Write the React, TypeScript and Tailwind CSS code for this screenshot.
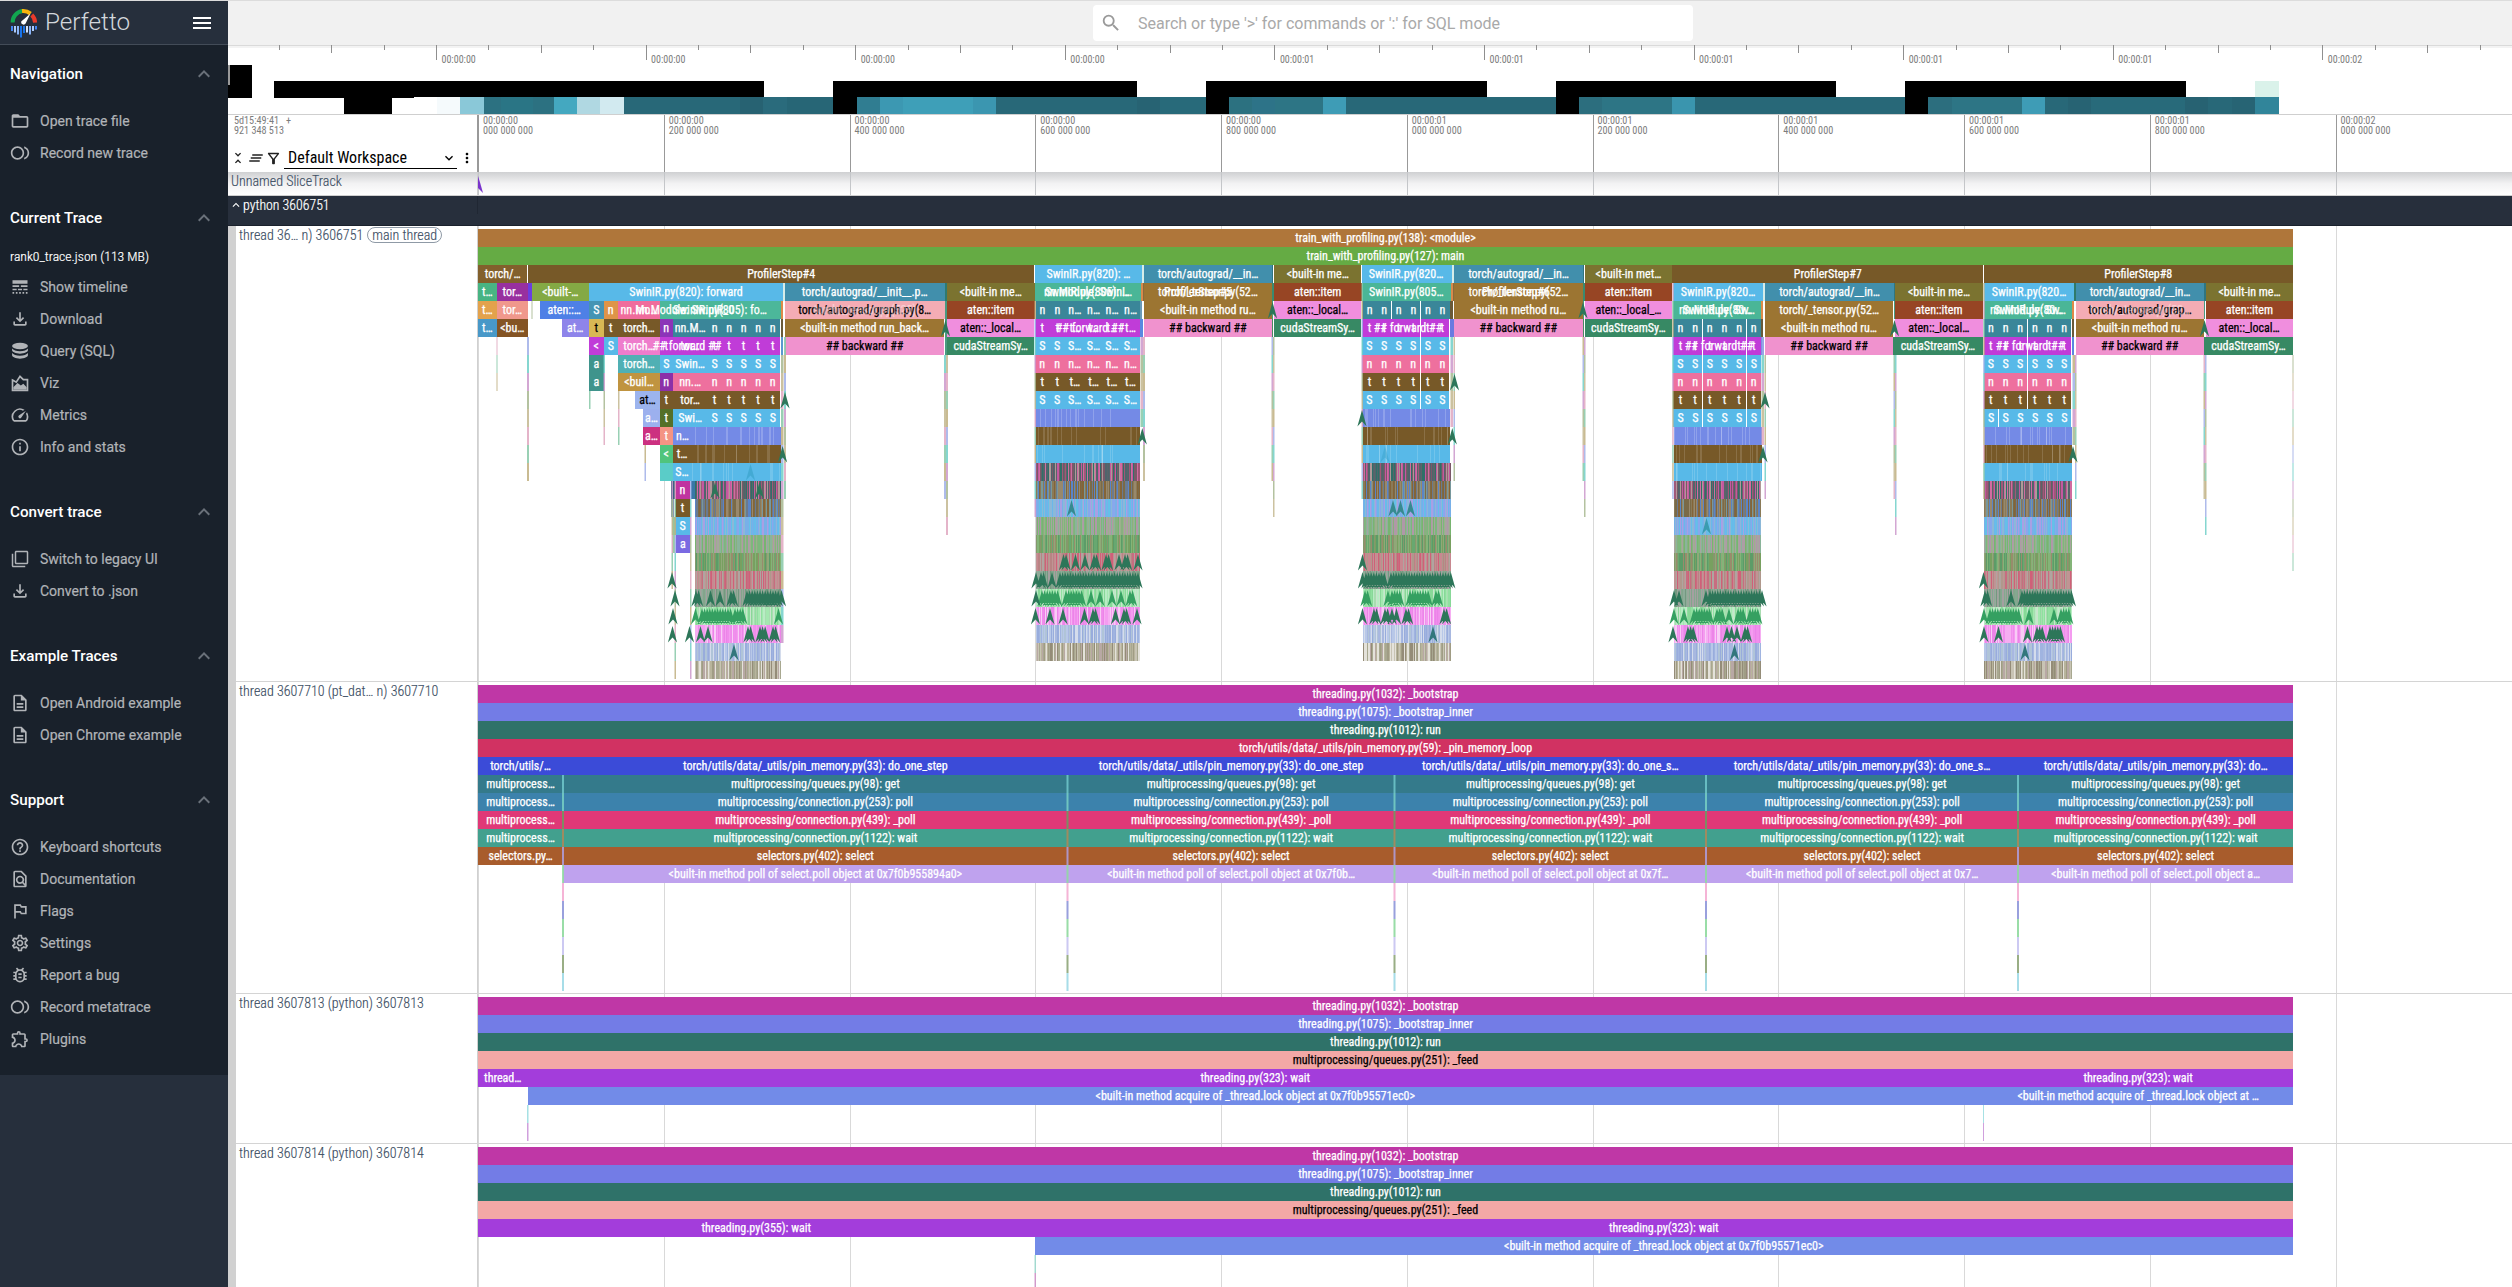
import React from 'react';
import {
  MdClearAll,
  MdFilterNone,
  MdHelpOutline,
  MdKeyboardArrowDown,
  MdKeyboardArrowUp,
  MdLineStyle,
  MdMenu,
  MdMoreVert,
  MdOutlineBugReport,
  MdOutlineDescription,
  MdOutlineExtension,
  MdOutlineFiberSmartRecord,
  MdOutlineFileDownload,
  MdOutlineFilterAlt,
  MdOutlineFindInPage,
  MdOutlineFolderOpen,
  MdOutlinedFlag,
  MdOutlineInfo,
  MdOutlineSettings,
  MdOutlineSpeed,
  MdSearch,
  MdUnfoldLess,
} from 'react-icons/md';

/* ------------------------------------------------------------------ */
/* Time axis: every x below is in page pixels, the axis starts at 478. */
/* ------------------------------------------------------------------ */
const AXIS = 478;
const END = 2293;
const ROW = 18;

type Slice = { x0: number; x1: number; c: string; t?: string; dark?: boolean };
type Label = { x: number; t: string; dim?: boolean };
type RowData = { s: Slice[]; l?: Label[] };

const sl = (x0: number, x1: number, c: string, t?: string, dark?: boolean): Slice => ({ x0, x1, c, t, dark });

const BROWN = '#775928';
const SKY = '#58b9e8';
const TEAL = '#3a8699';
const MINT = '#4ab697';
const VIOLET = '#c03cd8';
const PINK = '#ee709e';
const PERI = '#748ae6';
const BLUE = '#418fac';
const OCHRE = '#9c7532';
const OLIVE = '#7b7330';
const RUST = '#974524';
const ORCHID = '#f08ede';
const ROSE = '#f092ce';
const PINE = '#378964';
const SALMON = '#f4acb4';

/* Six equal layers of one forward pass, each with its own short label. */
function cells(bounds: number[], c: string, texts: string[]): Slice[] {
  return texts.map((t, i) => sl(bounds[i], bounds[i + 1] - 0.3, c, t));
}
const six = (x0: number, x1: number) => Array.from({ length: 7 }, (_, i) => x0 + ((x1 - x0) * i) / 6);

const B5 = [1035.5, 1049.5, 1065.5, 1084.5, 1103, 1121.5, 1140];
const B6 = six(1362.5, 1450);
const B7 = six(1673.5, 1761.5);
const B8 = six(1984, 2072);
const B4 = [673, 707.5, 722, 736.5, 751, 765.5, 780.5];
const rep = (t: string) => [t, t, t, t, t, t];
const five = (t: string) => [t, t, t + '…', t + '…', t + '…', t + '…'];
const tail = (t: string, k: string) => [t, k, k, k, k, k];

const MAIN: RowData[] = [
  { s: [sl(AXIS, END, '#af763a', 'train_with_profiling.py(138): <module>')] },
  { s: [sl(AXIS, END, '#65ab44', 'train_with_profiling.py(127): main')] },
  {
    s: [
      sl(478, 527.4, '#82602c', 'torch/…'),
      sl(527.8, 1034.5, BROWN, 'ProfilerStep#4'),
      sl(1035, 1142, SKY, 'SwinIR.py(820): …'),
      sl(1142, 1144, '#d6ece8'),
      sl(1144, 1272, BLUE, 'torch/autograd/__in…'),
      sl(1272, 1273.5, '#2f7580'),
      sl(1274, 1361.5, OLIVE, '<built-in me…'),
      sl(1362, 1450, SKY, 'SwinIR.py(820…'),
      sl(1450, 1452, SKY),
      sl(1452, 1454, '#d6ece8'),
      sl(1454, 1583, BLUE, 'torch/autograd/__in…'),
      sl(1583, 1584.5, '#2f7580'),
      sl(1585, 1672, OLIVE, '<built-in met…'),
      sl(1672.4, 1983.3, BROWN, 'ProfilerStep#7'),
      sl(1983.7, END, BROWN, 'ProfilerStep#8'),
    ],
  },
  {
    s: [
      sl(478, 496.5, '#48b483', 't…'),
      sl(497, 527.5, '#98309f', 'tor…'),
      sl(528, 532, '#6a3ee0'),
      sl(532, 588.5, '#84a944', '<built-…'),
      sl(589, 783, SKY, 'SwinIR.py(820): forward'),
      sl(783, 785, '#d6ece8'),
      sl(785, 944.5, BLUE, 'torch/autograd/__init__.p…'),
      sl(945, 947, '#2f7a70'),
      sl(947, 1034.5, OLIVE, '<built-in me…'),
      sl(1035, 1141, MINT, 'nn.Module: SwinI…'),
      sl(1141, 1142.5, '#d88a4c'),
      sl(1142.5, 1144, '#8a6a3c'),
      sl(1144, 1272, OCHRE, 'torch/_tensor.py(52…'),
      sl(1272, 1273.5, '#3a8a70'),
      sl(1274, 1361.5, RUST, 'aten::item'),
      sl(1362, 1450.5, MINT, 'SwinIR.py(805…'),
      sl(1450.5, 1452.5, '#d88a4c'),
      sl(1453, 1454, '#8a6a3c'),
      sl(1454, 1583, OCHRE, 'torch/_tensor.py(52…'),
      sl(1583, 1584.5, '#3a8a70'),
      sl(1585, 1672, RUST, 'aten::item'),
      sl(1673, 1763, SKY, 'SwinIR.py(820…'),
      sl(1763, 1765, '#d6ece8'),
      sl(1765, 1894, BLUE, 'torch/autograd/__in…'),
      sl(1894, 1895, '#2f7580'),
      sl(1895, 1983, OLIVE, '<built-in me…'),
      sl(1984, 2074, SKY, 'SwinIR.py(820…'),
      sl(2074, 2075.5, '#2f7a6a'),
      sl(2076, 2204, BLUE, 'torch/autograd/__in…'),
      sl(2204, 2205.5, '#2f7580'),
      sl(2206, END, OLIVE, '<built-in me…'),
    ],
    l: [
      { x: 1087, t: 'SwinIR.py(805): …' },
      { x: 1198, t: 'ProfilerStep#5' },
      { x: 1516, t: 'ProfilerStep#6' },
    ],
  },
  {
    s: [
      sl(478, 496.5, '#e3a24c', 't…'),
      sl(497, 527.5, '#f0988c', 'tor…'),
      sl(540, 588.5, '#4e80e6', 'aten::…'),
      sl(589, 603.5, '#4594b4', 'S'),
      sl(604, 617.5, '#de9448', 'n'),
      sl(618, 660, '#f06c9c', 'nn.Mo…'),
      sl(660, 780.5, '#4cb79a'),
      sl(781, 783, '#de8a48'),
      sl(785, 944.5, SALMON, 'torch/autograd/graph.py(8…', true),
      sl(945, 947, '#4a9a80'),
      sl(947, 1034.5, RUST, 'aten::item'),
      ...cells(B5, TEAL, five('n')),
      sl(1140.5, 1142.5, '#6a9ab8'),
      sl(1144, 1272, OCHRE, '<built-in method ru…'),
      sl(1272, 1273.5, '#4a9a80'),
      sl(1274, 1361.5, ORCHID, 'aten::_local…', true),
      ...cells(B6, TEAL, rep('n')),
      sl(1450, 1453, '#6a5a38'),
      sl(1454, 1583, OCHRE, '<built-in method ru…'),
      sl(1583, 1584.5, '#4a9a80'),
      sl(1585, 1672, ORCHID, 'aten::_local_…', true),
      sl(1673, 1761, MINT, 'nn.Module: Sw…'),
      sl(1761.5, 1763.5, '#de8a48'),
      sl(1765, 1893.5, OCHRE, 'torch/_tensor.py(52…'),
      sl(1894, 1895, '#4a9a80'),
      sl(1895, 1983, RUST, 'aten::item'),
      sl(1984, 2072, MINT, 'nn.Module: Sw…'),
      sl(2072.5, 2074.5, '#de8a48'),
      sl(2076, 2204, SALMON, 'torch/autograd/grap…', true),
      sl(2204, 2205.5, '#4a9a80'),
      sl(2206, END, RUST, 'aten::item'),
    ],
    l: [
      { x: 685, t: 'nn.Module: SwinIR_0' },
      { x: 720, t: 'SwinIR.py(805): fo…' },
      { x: 865, t: 'torch/_tensor.py(525)', dim: true },
      { x: 1717, t: 'SwinIR.py(80…' },
      { x: 2028, t: 'SwinIR.py(80…' },
      { x: 2140, t: 'torch/_tensor.py(52…', dim: true },
    ],
  },
  {
    s: [
      sl(478, 496.5, '#4898c8', 't…'),
      sl(497, 527.5, '#845424', '<bu…'),
      sl(562, 588.5, '#8e84ea', 'at…'),
      sl(589, 603.5, '#d8b854', 't', true),
      sl(604, 617.5, BROWN, 't'),
      sl(618, 660, BROWN, 'torch…'),
      sl(660, 672.5, '#8c34b8', 'n'),
      ...cells(B4, TEAL, tail('nn.M…', 'n')),
      sl(781, 783, '#6a5a38'),
      sl(785, 944.5, OCHRE, '<built-in method run_back…'),
      sl(945, 947, '#4a9a80'),
      sl(947, 1034.5, ORCHID, 'aten::_local…', true),
      ...cells(B5, VIOLET, ['t', 't', 't…', 't…', 't…', 't…']),
      sl(1140.5, 1143, '#5a88e0'),
      sl(1144, 1272, ROSE, '## backward ##', true),
      sl(1272, 1273.5, '#4a8a64'),
      sl(1274, 1361.5, PINE, 'cudaStreamSy…'),
      ...cells(B6, VIOLET, rep('t')),
      sl(1450, 1454, '#6a7ae0'),
      sl(1454, 1583, ROSE, '## backward ##', true),
      sl(1583, 1584.5, '#4a8a64'),
      sl(1585, 1672, PINE, 'cudaStreamSy…'),
      ...cells(B7, TEAL, rep('n')),
      sl(1761.5, 1763.5, '#6a5a38'),
      sl(1765, 1893.5, OCHRE, '<built-in method ru…'),
      sl(1895, 1983, ORCHID, 'aten::_local…', true),
      ...cells(B8, TEAL, rep('n')),
      sl(2072, 2074, '#6a5a38'),
      sl(2076, 2204, OCHRE, '<built-in method ru…'),
      sl(2206, END, ORCHID, 'aten::_local…', true),
    ],
    l: [
      { x: 1090, t: '## forward ##' },
      { x: 1408, t: '## forward ##' },
    ],
  },
  {
    s: [
      sl(589, 603.5, VIOLET, '<'),
      sl(604, 617.5, SKY, 'S'),
      sl(618, 660, '#ee7ccc', 'torch…'),
      sl(660, 672.5, VIOLET, 't'),
      ...cells(B4, VIOLET, tail('tor…', 't')),
      sl(781, 783, '#5a98d0'),
      sl(785, 944.5, ROSE, '## backward ##', true),
      sl(945, 947, '#4a9a80'),
      sl(947, 1034.5, PINE, 'cudaStreamSy…'),
      ...cells(B5, SKY, five('S')),
      ...cells(B6, SKY, rep('S')),
      ...cells(B7, VIOLET, rep('t')),
      sl(1761.5, 1764, '#6a7ae0'),
      sl(1765, 1893.5, ROSE, '## backward ##', true),
      sl(1893.5, 1983, PINE, 'cudaStreamSy…'),
      ...cells(B8, VIOLET, rep('t')),
      sl(2072, 2074.5, '#5a88e0'),
      sl(2076, 2204, ROSE, '## backward ##', true),
      sl(2204.5, END, PINE, 'cudaStreamSy…'),
    ],
    l: [
      { x: 687, t: '## forward ##' },
      { x: 1719, t: '## forward ##' },
      { x: 2030, t: '## forward ##' },
    ],
  },
  {
    s: [
      sl(589, 603.5, '#3f948c', 'a'),
      sl(618, 660, '#50b0b4', 'torch…'),
      sl(660, 672.5, SKY, 'S'),
      ...cells(B4, SKY, tail('Swin…', 'S')),
      ...cells(B5, PINK, five('n')),
      ...cells(B6, PINK, rep('n')),
      ...cells(B7, SKY, rep('S')),
      ...cells(B8, SKY, rep('S')),
    ],
  },
  {
    s: [
      sl(589, 603.5, '#3f948c', 'a'),
      sl(618, 660, '#c09440', '<buil…'),
      sl(660, 672.5, '#8c30a8', 'n'),
      ...cells(B4, PINK, tail('nn.…', 'n')),
      ...cells(B5, BROWN, five('t')),
      ...cells(B6, BROWN, rep('t')),
      ...cells(B7, PINK, rep('n')),
      ...cells(B8, PINK, rep('n')),
    ],
  },
  {
    s: [
      sl(635, 660, '#9cb4ee', 'at…', true),
      sl(660, 672.5, BROWN, 't'),
      ...cells(B4, BROWN, tail('tor…', 't')),
      ...cells(B5, SKY, five('S')),
      ...cells(B6, SKY, rep('S')),
      ...cells(B7, BROWN, rep('t')),
      ...cells(B8, BROWN, rep('t')),
    ],
  },
  {
    s: [
      sl(643, 660, '#9cb0ee', 'a…'),
      sl(660, 672.5, '#547028', 't'),
      ...cells(B4, SKY, tail('Swi…', 'S')),
      sl(1035.5, 1140, PERI),
      sl(1362.5, 1450, PERI),
      ...cells(B7, SKY, rep('S')),
      ...cells(B8, SKY, rep('S')),
    ],
  },
  {
    s: [
      sl(643, 660, '#cc3080', 'a…'),
      sl(660, 672.5, '#f49484', 't'),
      sl(673, 692, PERI, 'n…'),
      sl(692, 780.5, PERI),
      sl(1035.5, 1140, BROWN),
      sl(1362.5, 1450, BROWN),
      sl(1673.5, 1761.5, PERI),
      sl(1984, 2072, PERI),
    ],
  },
  {
    s: [
      sl(660, 672.5, '#50c47c', '<'),
      sl(673, 691, BROWN, 't…'),
      sl(691, 780.5, BROWN),
      sl(1035.5, 1140, SKY),
      sl(1362.5, 1450, SKY),
      sl(1673.5, 1761.5, BROWN),
      sl(1984, 2072, BROWN),
    ],
  },
  {
    s: [
      sl(660, 672.5, '#5accc8'),
      sl(673, 691, SKY, 'S…'),
      sl(691, 780.5, SKY),
      sl(1673.5, 1761.5, SKY),
      sl(1984, 2072, SKY),
    ],
  },
  { s: [sl(671, 675, '#3a6480'), sl(675, 690, '#c034a0', 'n'), sl(690.5, 695.5, '#3878a8')] },
  { s: [sl(671, 674, '#8a9ab4'), sl(675, 690, BROWN, 't')] },
  { s: [sl(672, 675, '#9ac49a'), sl(675, 690, SKY, 'S')] },
  { s: [sl(672, 675, '#9ad0a0'), sl(676, 689.5, '#7a6ae2', 'a')] },
];

/* ---------- dense bands of sub-pixel slices ---------- */
const BANDS: string[][] = [
  ['#c458a0', '#2f7068', '#a05878', '#5a6468', '#d06ca0', '#7a5868', '#b09898', '#50646c'],
  ['#7a6a48', '#5a84c8', '#8a7a58', '#78989c', '#846438', '#6a7a90', '#98886c'],
  ['#6ab8ea', '#88a8ec', '#78b0e8', '#a8a0e4', '#64c0e8', '#8cb8d8'],
  ['#88b080', '#78b470', '#a8a4a0', '#8ab49a', '#b098a8', '#9cb08c', '#7cb87c'],
  ['#78a060', '#5c9c68', '#84986c', '#90a878', '#68a870', '#988c6c', '#84b478'],
  ['#c86c80', '#b88484', '#c09494', '#d06078', '#b0988c', '#c88890', '#b0a4a0'],
  ['#84a890', '#749880', '#8cac98', '#98a89a', '#84a48c', '#a4a0a0'],
  ['#90e0a0', '#a4e8b0', '#b8ecc4', '#88d898', '#c8e4cc', '#a8dcb0'],
  ['#f08cec', '#f49cf0', '#f6aef2', '#ec84e8', '#f8ccf6', '#f090ec'],
  ['#98acdc', '#a8b8e0', '#b8c8e8', '#b0c4d8', '#d4dcec', '#a0b4e0'],
  ['#a09c84', '#b8b49c', '#c8c4b4', '#948c78', '#e4e2da', '#b8a8a4', '#a8a890'],
];

function makeRng(seed: number) {
  let s = seed;
  return () => {
    s = (s * 1664525 + 1013904223) % 4294967296;
    return s / 4294967296;
  };
}

function Band({ x0, x1, depth, palette, seed }: { x0: number; x1: number; depth: number; palette: string[]; seed: number }) {
  const rng = makeRng(seed);
  const d: string[] = palette.map(() => '');
  for (let x = Math.round(x0); x < x1; x += 1) {
    const i = Math.floor(rng() * palette.length);
    d[i] += `M${x - AXIS} ${depth * ROW}h1v${ROW}h-1z`;
  }
  return (
    <g shapeRendering="crispEdges">
      {palette.map((c, i) => (
        <path key={i} d={d[i]} fill={c} />
      ))}
    </g>
  );
}

/* light hairlines inside a solid block, where slices end and begin */
function Hairlines({ x0, x1, depth, seed, n, o }: { x0: number; x1: number; depth: number; seed: number; n: number; o: number }) {
  const rng = makeRng(seed);
  let d = '';
  for (let i = 0; i < n; i += 1) d += `M${Math.round(x0 + rng() * (x1 - x0)) - AXIS + 0.5} ${depth * ROW}v${ROW}`;
  return <path d={d} stroke="#fff" strokeOpacity={o} />;
}

const STACKS = [
  { x0: 695, x1: 781, base: 14, solid: 692, right: 781 },
  { x0: 1036, x1: 1140, base: 13, solid: 1036, right: 1140 },
  { x0: 1363, x1: 1451, base: 13, solid: 1363, right: 1450 },
  { x0: 1674, x1: 1761, base: 14, solid: 1674, right: 1761 },
  { x0: 1984, x1: 2072, base: 14, solid: 1984, right: 2072 },
];

/* ---------- thin columns hanging below the wide slices ---------- */
const THIN = ['#e0a8c0', '#88c8a8', '#c0b080', '#a0b0e8', '#70d0c8', '#cc98cc', '#a8b890', '#c4b890'];
type StreakSpec = [number, number, number, number];
const STREAKS: StreakSpec[] = [
  [496.5, 1, 6, 9],
  [527, 2, 6, 14],
  [531.5, 1, 4, 5],
  [589, 1.5, 9, 10],
  [603.5, 1.5, 7, 12],
  [618, 1.5, 9, 12],
  [644.5, 1.5, 12, 14],
  [671.5, 1.5, 14, 20],
  [674.5, 1.5, 14, 25],
  [690, 1.5, 14, 25],
  [781, 2.5, 7, 23],
  [784, 2, 6, 15],
  [944, 2, 7, 15],
  [946, 2, 7, 17],
  [1034.5, 1.5, 4, 16],
  [1140.5, 2.5, 6, 11],
  [1143, 2, 6, 14],
  [1271.5, 1.5, 6, 14],
  [1273, 1.5, 6, 16],
  [1361.5, 1.5, 3, 15],
  [1450.5, 2.5, 6, 11],
  [1453.5, 1.5, 6, 14],
  [1582.5, 1.5, 6, 14],
  [1584, 1.5, 6, 16],
  [1672.2, 1.5, 3, 15],
  [1761.5, 2.5, 6, 12],
  [1764.5, 1.5, 7, 15],
  [1893.5, 1.5, 7, 15],
  [1895, 1.5, 7, 17],
  [1983.2, 1.5, 3, 15],
  [2072.5, 2.5, 7, 12],
  [2075, 1.5, 7, 15],
  [2203.5, 1.5, 7, 15],
  [2205, 1.5, 7, 17],
  [2292.5, 1, 7, 19],
];

function Streaks({ list, palette }: { list: StreakSpec[]; palette: string[] }) {
  return (
    <g opacity={0.85}>
      {list.flatMap(([x, w, a, b], k) =>
        Array.from({ length: b - a }, (_, i) => (
          <rect key={`${k}-${i}`} x={x - AXIS} y={(a + i) * ROW} width={w} height={ROW} fill={palette[(i + k * 3) % palette.length]} />
        )),
      )}
    </g>
  );
}

/* ---------- instant events, drawn as arrow heads ---------- */
type Mark = number | [number, number];
const DARK = '#2d7659';
const GREEN = '#35a061';
const ARROWS: { d: number; c: string; o?: number; m: Mark[] }[] = [
  { d: 4, c: DARK, m: [1272.5, 1583] },
  { d: 5, c: DARK, m: [945.5, 1894.5, 2204.5] },
  { d: 8, c: DARK, m: [1454.5] },
  { d: 9, c: DARK, m: [785, 1765] },
  { d: 10, c: DARK, m: [1362] },
  { d: 11, c: DARK, m: [1142.3, 1452.3] },
  { d: 12, c: DARK, m: [782.6, 1763, 2073] },
  { d: 12, c: '#3aa4cc', o: 0.5, m: [1385] },
  { d: 13, c: '#3aa4cc', o: 0.7, m: [750.5] },
  { d: 14, c: DARK, m: [715, 759.5] },
  { d: 15, c: '#368a90', m: [1071.5, 1393, 1400.5, 1410.5] },
  { d: 16, c: '#3a9cb0', m: [1706.5] },
  { d: 18, c: DARK, m: [[1063.5, 1067], 1075.5, 1085, [1094, 1098], [1106, 1110], 1119, [1125, 1128], 1138, 1362.5] },
  { d: 19, c: DARK, m: [672, 1036, [1041, 1044], 1052, [1060, 1140], 1362.5, [1366, 1386], [1391, 1451], 1983.5] },
  { d: 20, c: DARK, m: [675, [696, 701], 710.5, 720, [731, 735], [747, 779], 781.5, 1674, 1679, 1706, [1710, 1762], [1985, 1989], 2011, [2022, 2073]] },
  { d: 20, c: GREEN, m: [[1042, 1060], [1066, 1083], 1091, 1100, 1112, 1121, [1130, 1135], [1365, 1369], 1388, [1392, 1401], [1410, 1430], [1436, 1440]] },
  { d: 20, c: DARK, m: [1036] },
  { d: 21, c: DARK, m: [673, 1035.5, 1050, 1063, 1084.5, [1093, 1097], 1115.5, [1124, 1128], 1137, 1362.5, [1374, 1377], [1385, 1388], 1392, 1396.5, [1406, 1409], [1444, 1449]] },
  { d: 21, c: GREEN, m: [695.5, [702, 732], [735, 744], 778.5, 1674, 1684, [1694, 1711], [1717, 1723], 1729, [1738, 1744], [1750, 1760], 1984, [1990, 2021], 2029, 2054, [2061, 2071]] },
  { d: 22, c: DARK, m: [672.5, 689.5, 700.5, 708, [748, 751], [760, 767], [773, 776], 1673, [1688, 1694], 1727, 1731.5, 1737, [1745, 1750], 1984, 1998.5, 2027.5, [2037, 2044], [2050, 2062]] },
  { d: 22, c: '#32777c', m: [1433] },
  { d: 23, c: '#32777c', m: [734, 1734.5, 2025] },
];

function Arrows() {
  return (
    <>
      {ARROWS.map((row, k) => {
        const xs = row.m.flatMap((m) => {
          if (typeof m === 'number') return [m];
          const out: number[] = [];
          for (let x = m[0]; x <= m[1]; x += 2.6) out.push(x);
          return out;
        });
        const y = row.d * ROW;
        const d = xs.map((x) => `M${x - AXIS} ${y + 1}l4.6 16.5l-4.6 -5l-4.6 5z`).join('');
        return <path key={k} d={d} fill={row.c} fillOpacity={row.o ?? 1} />;
      })}
    </>
  );
}

/* ------------------------------------------------------------------ */
/* Rows of slices                                                       */
/* ------------------------------------------------------------------ */
function SliceRow({ row }: { row: RowData }) {
  let cursor = AXIS;
  return (
    <div className="relative flex h-[18px]">
      {row.s.map((s, i) => {
        const gap = s.x0 - cursor;
        cursor = s.x1;
        return (
          <div
            key={i}
            className={`flex h-[18px] shrink-0 items-center justify-center whitespace-nowrap ${s.dark ? 'text-black' : 'text-white'}`}
            style={{ marginLeft: gap, width: s.x1 - s.x0, backgroundColor: s.c }}
          >
            {s.t}
          </div>
        );
      })}
      {row.l?.map((l, i) => (
        <span
          key={`l${i}`}
          className={`absolute top-0 -translate-x-1/2 whitespace-nowrap text-white ${l.dim ? 'opacity-40' : ''}`}
          style={{ left: l.x - AXIS }}
        >
          {l.t}
        </span>
      ))}
    </div>
  );
}

function Grid({ strong }: { strong?: boolean }) {
  return (
    <div className="absolute inset-0 flex overflow-hidden">
      {Array.from({ length: 11 }, (_, i) => (
        <div
          key={i}
          className={`w-[185.75px] shrink-0 border-l ${strong ? 'border-[#c4c6c9]' : 'border-[#d9d9d9]'}`}
        />
      ))}
    </div>
  );
}

function Track({
  title,
  badge,
  height,
  rows,
  children,
}: {
  title: string;
  badge?: string;
  height: string;
  rows: RowData[];
  children?: React.ReactNode;
}) {
  return (
    <div className={`flex shrink-0 border-b border-[#d4d4d4] ${height}`}>
      <div className="flex w-[250px] shrink-0 border-r border-[#d0d0d0]">
        <div className="-mb-px w-2 bg-[#d1d1d1]" />
        <div className="flex h-[18px] items-center gap-1 pl-[3px] text-[14px] font-light text-[#3c4e63] [-webkit-text-stroke:0.15px_currentColor]">
          <span>{title}</span>
          {badge && (
            <span className="rounded-full border border-[#8f9aa6] px-1 leading-[14px]">{badge}</span>
          )}
        </div>
      </div>
      <div className="relative min-w-0 flex-1">
        <Grid />
        <div className="relative pt-[3px] text-[12px] leading-[18px] [-webkit-text-stroke:0.25px_currentColor]">
          <div className="relative flex flex-col">
            {rows.map((r, i) => (
              <SliceRow key={i} row={r} />
            ))}
            <svg className="pointer-events-none absolute left-0 top-0 h-[450px] w-[2034px] overflow-visible">
              {children}
            </svg>
          </div>
        </div>
      </div>
    </div>
  );
}

/* ---------- worker threads ---------- */
const bootstrap: RowData[] = [
  { s: [sl(AXIS, END, '#bf37a6', 'threading.py(1032): _bootstrap')] },
  { s: [sl(AXIS, END, '#737ce6', 'threading.py(1075): _bootstrap_inner')] },
  { s: [sl(AXIS, END, '#2f7269', 'threading.py(1012): run')] },
];
const feed: RowData = { s: [sl(AXIS, END, '#f3a8a6', 'multiprocessing/queues.py(251): _feed', true)] };

const CUTS = [478, 563, 1067.5, 1394.5, 1706, 2018, END];
const parts = (c: string, texts: string[], from = 0): RowData => ({
  s: texts.map((t, i) => sl(CUTS[i + from] + (i + from ? 0.25 : 0), CUTS[i + from + 1], c, t)),
});
const same = (first: string, t: string) => [first, t, t, t, t, t];

const PIN: RowData[] = [
  ...bootstrap,
  { s: [sl(AXIS, END, '#d13262', 'torch/utils/data/_utils/pin_memory.py(59): _pin_memory_loop')] },
  parts('#3b4bd8', [
    'torch/utils/…',
    'torch/utils/data/_utils/pin_memory.py(33): do_one_step',
    'torch/utils/data/_utils/pin_memory.py(33): do_one_step',
    'torch/utils/data/_utils/pin_memory.py(33): do_one_s…',
    'torch/utils/data/_utils/pin_memory.py(33): do_one_s…',
    'torch/utils/data/_utils/pin_memory.py(33): do…',
  ]),
  parts('#347a8b', same('multiprocess…', 'multiprocessing/queues.py(98): get')),
  parts('#3c82ac', same('multiprocess…', 'multiprocessing/connection.py(253): poll')),
  parts('#e03877', same('multiprocess…', 'multiprocessing/connection.py(439): _poll')),
  parts('#42a08e', same('multiprocess…', 'multiprocessing/connection.py(1122): wait')),
  parts('#a85c2c', same('selectors.py…', 'selectors.py(402): select')),
  parts(
    '#bfa2ee',
    [
      '<built-in method poll of select.poll object at 0x7f0b955894a0>',
      '<built-in method poll of select.poll object at 0x7f0b…',
      '<built-in method poll of select.poll object at 0x7f…',
      '<built-in method poll of select.poll object at 0x7…',
      '<built-in method poll of select.poll object a…',
    ],
    1,
  ),
];

const PIN_COLORS = ['#70c8cc', '#78d0c4', '#6c9c60', '#b08858', '#b0a0e0', '#90dca0', '#f4a8d0', '#8890d8', '#88d898', '#c4c0f0', '#88a070', '#98d8e4'];

const FEED_A: RowData[] = [
  ...bootstrap,
  feed,
  { s: [sl(478, 527.5, '#a33ddb', 'thread…'), sl(527.5, 1983, '#a33ddb', 'threading.py(323): wait'), sl(1983.3, END, '#a33ddb', 'threading.py(323): wait')] },
  {
    s: [
      sl(527.5, 1983, '#728be8', '<built-in method acquire of _thread.lock object at 0x7f0b95571ec0>'),
      sl(1983.3, END, '#728be8', '<built-in method acquire of _thread.lock object at …'),
    ],
  },
];
const FEED_B: RowData[] = [
  ...bootstrap,
  feed,
  { s: [sl(478, 1034.5, '#a33ddb', 'threading.py(355): wait'), sl(1034.5, END, '#a33ddb', 'threading.py(323): wait')] },
  { s: [sl(1034.5, END, '#728be8', '<built-in method acquire of _thread.lock object at 0x7f0b95571ec0>')] },
];

/* ------------------------------------------------------------------ */
/* Sidebar                                                              */
/* ------------------------------------------------------------------ */
function DatabaseIcon() {
  return (
    <svg viewBox="0 0 24 24" className="size-5" fill="currentColor">
      <ellipse cx="12" cy="6" rx="9.5" ry="4" />
      <path d="M2.5 9c1.4 2 5 3.2 9.5 3.2S20.1 11 21.5 9v2.2c0 2.2-4.3 4-9.5 4s-9.5-1.8-9.5-4z" />
      <path d="M2.5 14.5c1.4 2 5 3.2 9.5 3.2s8.1-1.2 9.5-3.2v2.7c0 2.2-4.3 4-9.5 4s-9.5-1.8-9.5-4z" />
    </svg>
  );
}

function VizIcon() {
  return (
    <svg viewBox="0 0 24 24" className="size-5" fill="none" stroke="currentColor" strokeWidth="2">
      <path d="M3 8.5l4.5 2.500L12 4l4 4h5v13H3z" />
      <path d="M4 20v-3l5-5 4 3 3-2 4 4v3z" fill="currentColor" stroke="none" />
    </svg>
  );
}

type Item = { icon: React.ReactNode; text: string };
const ic = 'size-5';
const SECTIONS: { title: string; note?: string; items: Item[] }[] = [
  {
    title: 'Navigation',
    items: [
      { icon: <MdOutlineFolderOpen className={ic} />, text: 'Open trace file' },
      { icon: <MdOutlineFiberSmartRecord className={ic} />, text: 'Record new trace' },
    ],
  },
  {
    title: 'Current Trace',
    note: 'rank0_trace.json (113 MB)',
    items: [
      { icon: <MdLineStyle className={ic} />, text: 'Show timeline' },
      { icon: <MdOutlineFileDownload className={ic} />, text: 'Download' },
      { icon: <DatabaseIcon />, text: 'Query (SQL)' },
      { icon: <VizIcon />, text: 'Viz' },
      { icon: <MdOutlineSpeed className={ic} />, text: 'Metrics' },
      { icon: <MdOutlineInfo className={ic} />, text: 'Info and stats' },
    ],
  },
  {
    title: 'Convert trace',
    items: [
      { icon: <MdFilterNone className="size-[18px]" />, text: 'Switch to legacy UI' },
      { icon: <MdOutlineFileDownload className={ic} />, text: 'Convert to .json' },
    ],
  },
  {
    title: 'Example Traces',
    items: [
      { icon: <MdOutlineDescription className={ic} />, text: 'Open Android example' },
      { icon: <MdOutlineDescription className={ic} />, text: 'Open Chrome example' },
    ],
  },
  {
    title: 'Support',
    items: [
      { icon: <MdHelpOutline className={ic} />, text: 'Keyboard shortcuts' },
      { icon: <MdOutlineFindInPage className={ic} />, text: 'Documentation' },
      { icon: <MdOutlinedFlag className={ic} />, text: 'Flags' },
      { icon: <MdOutlineSettings className={ic} />, text: 'Settings' },
      { icon: <MdOutlineBugReport className={ic} />, text: 'Report a bug' },
      { icon: <MdOutlineFiberSmartRecord className={ic} />, text: 'Record metatrace' },
      { icon: <MdOutlineExtension className={ic} />, text: 'Plugins' },
    ],
  },
];

function Logo() {
  return (
    <svg viewBox="0 0 28 30" className="h-[30px] w-7">
      <path d="M2.6 14.5A11.3 11.3 0 0 1 12.5 3" fill="none" stroke="#12a650" strokeWidth="4" />
      <path d="M12 3a11.3 11.3 0 0 1 8.5 2.6" fill="none" stroke="#f9b50c" strokeWidth="4" />
      <path d="M21.8 7a11.3 11.3 0 0 1 3.3 7.6" fill="none" stroke="#ea3a2a" strokeWidth="4" />
      <path d="M20.5 5.5L15.6 15.6a2.5 2.5 0 0 1-4.400-2.200z" fill="#fff" />
      <path d="M2 18v5M26 18v3.500" stroke="#4285f4" strokeWidth="2" />
      <path d="M5 18v6.500M23 18v5" stroke="#aecbfa" strokeWidth="2" />
      <path d="M8 18v8.500M20 18v8.500" stroke="#8ab4f8" strokeWidth="2" />
      <path d="M11 18v11.500M14 18v7" stroke="#1a73e8" strokeWidth="2" />
      <path d="M17 18v6.500" stroke="#d2e3fc" strokeWidth="2" />
    </svg>
  );
}

function Sidebar() {
  return (
    <aside className="flex w-[228px] shrink-0 flex-col bg-[#262f3c] font-['Roboto']">
      <div className="flex h-11 items-center border-b border-[#434c58] pl-[10px] pr-[14px]">
        <Logo />
        <span className="ml-[7px] text-[24.3px] font-light leading-none text-[#d3d7dc]">Perfetto</span>
        <MdMenu className="ml-auto size-6 text-white" />
      </div>
      <nav className="bg-[#19212b]">
        {SECTIONS.map((s) => (
          <section key={s.title} className="mb-5 last:mb-0 last:pb-5">
            <div className="mb-0.5 flex h-[58px] items-center justify-between pl-[10px] pr-3">
              <h2 className="text-[15.2px] font-medium text-white">{s.title}</h2>
              <MdKeyboardArrowUp className="size-6 text-[#6a717a]" />
            </div>
            {s.note && (
              <p className="mb-2 flex h-[14px] items-center pl-[10px] font-['Roboto_Condensed'] text-[13.7px] font-light text-white [-webkit-text-stroke:0.2px_currentColor]">{s.note}</p>
            )}
            <ul>
              {s.items.map((it) => (
                <li key={it.text} className="flex h-8 items-center gap-[10px] pl-[10px] text-sm text-[#b1b4b8]">
                  <span className="flex size-5 items-center justify-center">{it.icon}</span>
                  <span className="[-webkit-text-stroke:0.2px_currentColor]">{it.text}</span>
                </li>
              ))}
            </ul>
          </section>
        ))}
      </nav>
    </aside>
  );
}

/* ------------------------------------------------------------------ */
/* Overview timeline                                                    */
/* ------------------------------------------------------------------ */
const HEAT: [number, number, string][] = [
  [437, 460, '#f5fafc'], [460, 484, '#8ac8d8'], [484, 501, '#2c7181'], [501, 533, '#2a7585'], [533, 554, '#2c7181'],
  [554, 577, '#44a8c0'], [577, 600, '#b0d8e2'], [600, 624, '#d2eaf0'], [624, 740, '#286878'], [740, 763, '#276272'],
  [763, 787, '#2a6b7c'], [787, 833, '#276676'], [857, 880, '#307d91'], [880, 903, '#3c98b2'], [903, 973, '#3e9fb8'],
  [973, 996, '#3b96b0'], [996, 1137, '#286878'], [1137, 1160, '#276373'], [1160, 1206, '#286a7a'],
  [1229, 1252, '#2c7180'], [1252, 1275, '#2d7388'], [1275, 1323, '#2d7585'], [1323, 1346, '#3e9cb6'], [1346, 1556, '#286878'],
  [1579, 1602, '#2c6e7e'], [1602, 1672, '#2d7585'], [1672, 1695, '#3a95ae'], [1695, 1905, '#286878'],
  [1928, 1952, '#2c6e7e'], [1952, 2022, '#2d7585'], [2022, 2045, '#3e9cb6'], [2045, 2068, '#286878'], [2068, 2091, '#276373'],
  [2091, 2185, '#286a7a'], [2185, 2208, '#276272'], [2208, 2232, '#286878'], [2232, 2255, '#276474'], [2255, 2279, '#31859a'],
];
const BUSY: [number, number, number, number][] = [
  [230, 65, 22, 33], [274, 81, 490, 16], [274, 97, 140, 1], [344, 97, 48, 17], [833, 81, 24, 33], [857, 81, 280, 16],
  [1206, 81, 23, 33], [1229, 81, 258, 16], [1556, 81, 23, 33], [1579, 81, 257, 16], [1905, 81, 23, 33], [1928, 81, 258, 16],
];

function Overview() {
  const labels = ['00:00:00', '00:00:00', '00:00:00', '00:00:00', '00:00:01', '00:00:01', '00:00:01', '00:00:01', '00:00:01', '00:00:02'];
  return (
    <div className="relative h-[70px] shrink-0 border-b border-[#cfcfcf] bg-white">
      <svg viewBox="228 45 2284 69" className="absolute inset-0 h-[69px] w-[2284px]" shapeRendering="crispEdges">
        <rect x="228" y="45" width="2284" height="1" fill="#dadada" />
        <rect x="228" y="46" width="2284" height="2" fill="#f3f3f3" />
        {Array.from({ length: 43 }, (_, i) => {
          const x = Math.floor(436.5 + (i - 3) * 52.4);
          const h = (i - 3) % 4 === 0 ? 15 : (i - 3) % 2 === 0 ? 8 : 5;
          return <rect key={i} x={x} y={45} width={1} height={h} fill="#8f8f8f" />;
        })}
        {BUSY.map(([x, y, w, h]) => (
          <rect key={`${x}-${y}`} x={x} y={y} width={w} height={h} fill="#000" />
        ))}
        <rect x="228" y="65" width="2" height="20" fill="#999" />
        <rect x="228" y="85" width="2" height="13" fill="#000" />
        {HEAT.map(([a, b, c]) => (
          <rect key={a} x={a} y={97} width={b - a} height={17} fill={c} />
        ))}
        <rect x="2255" y="81" width="24" height="16" fill="#daf2ea" />
      </svg>
      <div className="relative ml-[208.5px] flex pt-[9px] text-[10px] leading-[12px] text-[#7c7c7c]">
        {labels.map((l, i) => (
          <span key={i} className="w-[209.6px] shrink-0 pl-[5px]">
            {l}
          </span>
        ))}
      </div>
    </div>
  );
}

function TimeHeader() {
  const ticks = ['00:00:00|000 000 000', '00:00:00|200 000 000', '00:00:00|400 000 000', '00:00:00|600 000 000', '00:00:00|800 000 000', '00:00:01|000 000 000', '00:00:01|200 000 000', '00:00:01|400 000 000', '00:00:01|600 000 000', '00:00:01|800 000 000', '00:00:02|000 000 000'];
  return (
    <div className="flex h-[57px] shrink-0 bg-white">
      <div className="flex w-[249px] shrink-0 flex-col">
        <div className="whitespace-pre pl-[6px] pt-px text-[10.2px] leading-[10px] text-[#7c7c7c]">
          {'5d15:49:41   +\n921 348 513'}
        </div>
        <div className="mt-auto flex h-[28px] items-center pl-[2px] text-[#222]">
          <MdUnfoldLess className="size-4" />
          <MdClearAll className="ml-[1px] size-[18px]" />
          <MdOutlineFilterAlt className="size-[17px]" />
          <div className="ml-[2px] flex h-[22px] w-[173px] items-center justify-between border-b border-black pl-1 text-[16px] text-black">
            Default Workspace
            <MdKeyboardArrowDown className="size-4" />
          </div>
          <MdMoreVert className="ml-[2px] size-4 text-black" />
        </div>
      </div>
      <div className="flex min-w-0 flex-1 overflow-hidden border-l border-[#999]">
        {ticks.map((t, i) => {
          const [a, b] = t.split('|');
          return (
            <div key={i} className="w-[185.75px] shrink-0 border-l border-[#999] pl-[4px] pt-px text-[10.2px] leading-[10px] text-[#7c7c7c]">
              <div>{a}</div>
              <div>{b}</div>
            </div>
          );
        })}
      </div>
    </div>
  );
}

export default function App() {
  return (
    <div className="flex h-[1287px] w-[2512px] flex-col overflow-hidden border-t border-[#dcdcdc] bg-white font-['Roboto_Condensed']">
      <div className="flex min-h-0 flex-1">
        <Sidebar />
        <main className="flex min-w-0 flex-1 flex-col">
          <header className="flex h-11 shrink-0 items-center justify-center bg-[#f1f1f1]">
            <div className="mr-[-46px] flex h-9 w-[600px] items-center rounded-sm bg-white pl-[7px] font-['Roboto'] text-base text-[#a9a9a9]">
              <MdSearch className="size-[22px] text-[#9a9a9a]" />
              <span className="ml-4 pt-[2px]">Search or type '&gt;' for commands or ':' for SQL mode</span>
            </div>
          </header>
          <Overview />
          <TimeHeader />
          <div className="relative flex h-6 shrink-0 border-b border-[#cfcfcf] bg-linear-to-b from-[#cfd0d2] via-[#f2f2f3] to-white">
            <div className="w-[250px] shrink-0 border-r border-[#cfcfcf] pl-[3px] text-[14px] font-light leading-[18px] text-[#3c4e63] [-webkit-text-stroke:0.15px_currentColor]">
              Unnamed SliceTrack
            </div>
            <div className="relative flex-1">
              <Grid strong />
              <svg viewBox="0 0 8 24" className="absolute left-0 top-0 h-6 w-2">
                <path d="M0 4L2.500 12 5 21 0 16z" fill="#7a34cc" />
              </svg>
            </div>
          </div>
          <div className="flex h-[30px] shrink-0 border-b border-[#1a212c] bg-[#272f3c] text-[13.8px] font-light text-white">
            <div className="flex h-[18px] w-[250px] items-center border-r border-[#202733] pl-[1px] [-webkit-text-stroke:0.2px_currentColor]">
              <MdKeyboardArrowUp className="size-[14px]" />
              <span>python 3606751</span>
            </div>
          </div>
          <Track title="thread 36… n) 3606751" badge="main thread" height="h-[456px]" rows={MAIN}>
            {STACKS.flatMap((s, k) =>
              BANDS.map((p, i) => <Band key={`${k}-${i}`} x0={s.x0} x1={s.x1} depth={s.base + i} palette={p} seed={k * 97 + i * 31 + 7} />),
            )}
            {STACKS.map((s, k) => (
              <g key={k}>
                <Hairlines x0={s.solid} x1={s.right} depth={s.base - 3} seed={k * 11 + 3} n={16} o={0.2} />
                <Hairlines x0={s.solid} x1={s.right} depth={s.base - 2} seed={k * 13 + 5} n={16} o={0.14} />
                <Hairlines x0={s.solid} x1={s.right} depth={s.base - 1} seed={k * 17 + 9} n={14} o={0.16} />
              </g>
            ))}
            <Streaks list={STREAKS} palette={THIN} />
            <Arrows />
          </Track>
          <Track title="thread 3607710 (pt_dat… n) 3607710" height="h-[312px]" rows={PIN}>
            {[562, 1066.5, 1393.5, 1705, 2017].map((x) => (
              <Streaks key={x} list={[[x, 2, 5, 17]]} palette={PIN_COLORS} />
            ))}
          </Track>
          <Track title="thread 3607813 (python) 3607813" height="h-[150px]" rows={FEED_A}>
            <Streaks list={[[527, 1.5, 6, 8], [1983, 1, 6, 8]]} palette={['#98dce0', '#c890d8', '#c890d8', '#98dce0', '#c890d8']} />
          </Track>
          <Track title="thread 3607814 (python) 3607814" height="h-[200px]" rows={FEED_B}>
            <Streaks list={[[1034.5, 1.5, 6, 8]]} palette={['#98d8cc', '#d090c8']} />
          </Track>
        </main>
      </div>
    </div>
  );
}
